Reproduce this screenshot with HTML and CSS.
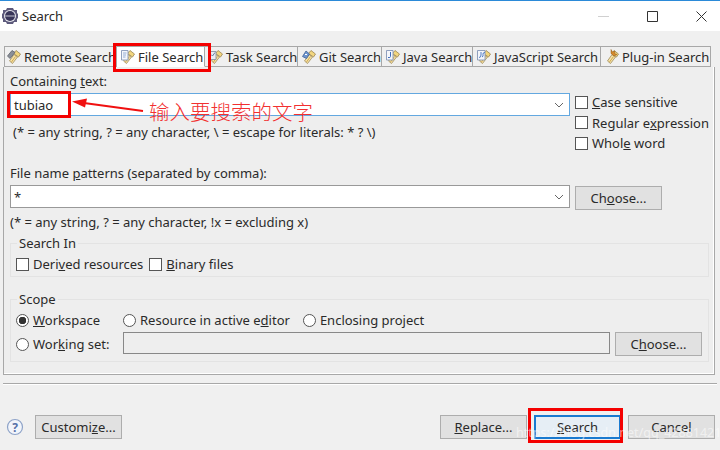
FILE: index.html
```
<!DOCTYPE html>
<html lang="en">
<head>
<meta charset="utf-8">
<title>Search</title>
<link rel="stylesheet" href="styles.css">
</head>
<body>
<svg class="defs" width="0" height="0" aria-hidden="true">
  <defs>
    <symbol id="torch" viewBox="0 0 16 16">
      <path d="M10 1.500l4.500 3.500-2 3-5-3.500z" fill="#f2d67e" stroke="#9a8450" stroke-width=".8"/>
      <path d="M8 5.500l3.500 2.500-5 6.500-3-2.500z" fill="#f6e3a8" stroke="#a08c5a" stroke-width=".8"/>
      <path d="M9.500 7.500l-4 5.500" stroke="#d0a850" stroke-width="1"/>
    </symbol>
    <symbol id="page" viewBox="0 0 16 16">
      <path d="M1.500 1.500h6.500v9.500H1.500z" fill="#f4f6fb" stroke="#8496b8" stroke-width=".9"/>
      <path d="M3 4h3.500M3 6h3M3 8h2.500" stroke="#7f9ccc" stroke-width=".8"/>
    </symbol>
    <symbol id="remote" viewBox="0 0 16 16">
      <path d="M1.500 7L6 1.500l3 2-5 6z" fill="#8a8f98" stroke="#5d626b" stroke-width=".8"/>
    </symbol>
    <symbol id="task" viewBox="0 0 16 16">
      <path d="M1.500 2.500h6.500v8H1.500z" fill="#e9edf4" stroke="#8a93a5" stroke-width=".9"/>
      <path d="M3 5.500l1.500 1.500L7 3.500" fill="none" stroke="#5a6f95" stroke-width=".9"/>
    </symbol>
    <symbol id="git" viewBox="0 0 16 16">
      <path d="M1.500 7.500L5 2l3.500 3-3 4.500z" fill="#6f96cf" stroke="#3f5f96" stroke-width=".8"/>
      <path d="M4 5.500h2" stroke="#fff" stroke-width="1"/>
    </symbol>
    <symbol id="java" viewBox="0 0 16 16">
      <path d="M1.500 1.500h6.500v9.500H1.500z" fill="#f4f6fb" stroke="#8496b8" stroke-width=".9"/>
      <path d="M5.500 3v4.500Q5.500 9 3 8.500" fill="none" stroke="#3f6fc0" stroke-width="1"/>
    </symbol>
    <symbol id="script" viewBox="0 0 16 16">
      <path d="M1.500 1.500h7.500v9.500H1.500z" fill="#f4f6fb" stroke="#8496b8" stroke-width=".9"/>
      <path d="M3 8.500Q5 8.500 5 6V3M9 3.500Q6.500 3.500 7 5.500T6 8" fill="none" stroke="#3f6fc0" stroke-width=".9"/>
    </symbol>
    <symbol id="plugin" viewBox="0 0 16 16">
      <path d="M7 .5l1.500 2.500 2.500-1-.5 2.500 2.500 1-3 1.500-3-2.500z" fill="#d98a2a" stroke="#8a5a1c" stroke-width=".5"/>
    </symbol>
  </defs>
</svg>

<header class="titlebar">
  <svg class="app-icon" viewBox="0 0 18 18" width="18" height="18">
    <path d="M2 3h3l1-2h6l1 2h3v3l1 1v4l-1 1v3h-3l-1 2H6l-1-2H2v-3l-1-1V7l1-1z" fill="#5d5a7c"/>
    <circle cx="9" cy="9" r="6" fill="#e8e8ee"/>
    <circle cx="9" cy="9" r="5" fill="#39365a"/>
    <path d="M4.200 9h9.600" stroke="#e8e8ee" stroke-width=".8"/>
  </svg>
  <span class="title">Search</span>
  <div class="window-controls">
    <svg viewBox="0 0 11 11" width="11" height="11"><path d="M0 5.500h11" stroke="#d0d0d0"/></svg>
    <svg viewBox="0 0 11 11" width="11" height="11"><path d="M.5 .5h10v10H.5z" fill="none" stroke="#333"/></svg>
    <svg viewBox="0 0 11 11" width="11" height="11"><path d="M.5 .5l10 10M10.500 .5l-10 10" stroke="#333"/></svg>
  </div>
</header>

<nav class="tabs">
  <div class="tab first"><svg width="16" height="16"><use href="#torch"/><use href="#remote"/></svg>Remote Search</div>
  <div class="tab active"><svg width="16" height="16"><use href="#torch"/><use href="#page"/></svg>File Search</div>
  <div class="tab"><svg width="16" height="16"><use href="#torch"/><use href="#task"/></svg>Task Search</div>
  <div class="tab"><svg width="16" height="16"><use href="#torch"/><use href="#git"/></svg>Git Search</div>
  <div class="tab"><svg width="16" height="16"><use href="#torch"/><use href="#java"/></svg>Java Search</div>
  <div class="tab"><svg width="16" height="16"><use href="#torch"/><use href="#script"/></svg>JavaScript Search</div>
  <div class="tab"><svg width="16" height="16"><use href="#torch"/><use href="#plugin"/></svg>Plug-in Search</div>
</nav>

<main class="panel">
  <section class="top-row">
    <div class="main-col">
      <div class="label">Containing <u>t</u>ext:</div>
      <div class="combo focus"><span>tubiao</span><svg class="chev" viewBox="0 0 10 6" width="10" height="6"><path d="M1 1l4 4 4-4" fill="none" stroke="#666"/></svg></div>
      <div class="hint indent">(* = any string, ? = any character, \ = escape for literals: * ? \)</div>
    </div>
    <div class="options">
      <label class="check"><i class="box"></i><span><u>C</u>ase sensitive</span></label>
      <label class="check"><i class="box"></i><span>Regular e<u>x</u>pression</span></label>
      <label class="check"><i class="box"></i><span>Whol<u>e</u> word</span></label>
    </div>
  </section>

  <section class="patterns">
    <div class="label">File name <u>p</u>atterns (separated by comma):</div>
    <div class="pattern-row">
      <div class="combo"><span>*</span><svg class="chev" viewBox="0 0 10 6" width="10" height="6"><path d="M1 1l4 4 4-4" fill="none" stroke="#666"/></svg></div>
      <button class="btn">Ch<u>o</u>ose...</button>
    </div>
    <div class="hint">(* = any string, ? = any character, !x = excluding x)</div>
  </section>

  <fieldset class="group search-in">
    <legend>Search In</legend>
    <div class="group-row">
      <label class="check"><i class="box"></i><span>Deri<u>v</u>ed resources</span></label>
      <label class="check"><i class="box"></i><span><u>B</u>inary files</span></label>
    </div>
  </fieldset>

  <fieldset class="group scope">
    <legend>Scope</legend>
    <div class="scope-grid">
      <label class="check"><i class="radio on"></i><span><u>W</u>orkspace</span></label>
      <div class="scope-others">
        <label class="check"><i class="radio"></i><span>Resource in active e<u>d</u>itor</span></label>
        <label class="check"><i class="radio"></i><span>Enclosing project</span></label>
      </div>
      <label class="check"><i class="radio"></i><span>Wor<u>k</u>ing set:</span></label>
      <div class="working">
        <div class="text-field"></div>
        <button class="btn">C<u>h</u>oose...</button>
      </div>
    </div>
  </fieldset>
</main>

<div class="separator"></div>

<footer class="footer">
  <svg class="help" viewBox="0 0 18 18" width="18" height="18">
    <circle cx="9" cy="9" r="7.500" fill="#f2f5fb" stroke="#8ea3c8" stroke-width="1.200"/>
    <text x="9" y="13.500" text-anchor="middle" class="help-mark">?</text>
  </svg>
  <button class="btn">Customi<u>z</u>e...</button>
  <div class="spacer"></div>
  <button class="btn"><u>R</u>eplace...</button>
  <button class="btn default"><u>S</u>earch</button>
  <button class="btn">Cancel</button>
</footer>

<div class="mark mark-tab"></div>
<div class="mark mark-input"></div>
<div class="mark mark-search"></div>
<svg class="arrow" viewBox="0 0 72 16" width="72" height="16">
  <path d="M12 5L71 13" stroke="#f01010" stroke-width="2"/>
  <path d="M0 3.500L15 0.500L13 9.500z" fill="#f01010"/>
</svg>
<div class="note">输入要搜索的文字</div>
<div class="watermark">https://blog.csdn.net/qq_42881421</div>
</body>
</html>
```
FILE: styles.css
```
* { box-sizing: border-box; }
html, body { margin: 0; padding: 0; }
body {
  position: relative;
  width: 720px;
  height: 450px;
  overflow: hidden;
  background: #f0f0f0;
  color: #2a2a2a;
  font: 13px/16px "Noto Sans", "Open Sans", sans-serif;
}
.defs { position: absolute; }
u { text-underline-offset: 1px; }

.titlebar {
  display: flex;
  align-items: center;
  height: 31px;
  padding: 0 0 0 1px;
  background: #fff;
  border-top: 1px solid #2b8ad8;
}
.app-icon { flex: none; }
.title { margin-left: 3px; }
.window-controls {
  display: flex;
  margin-left: auto;
  margin-right: 13px;
  gap: 38px;
}

.tabs {
  display: grid;
  grid-template-columns: 113px 88px 93px 84px 91px 128px 110px;
  height: 21px;
  margin: 15px 0 0 4px;
}
.tab {
  display: flex;
  align-items: center;
  gap: 2px;
  padding-left: 3px;
  overflow: hidden;
  white-space: nowrap;
  border: 1px solid #a8a8a8;
  border-left: 0;
  background: #f0f0f0;
}
.tab.first { border-left: 1px solid #a8a8a8; padding-left: 1px; }
.tab.active {
  background: #fff;
  border-bottom-color: #fff;
}
.tab svg { flex: none; }

.panel {
  width: 712px;
  height: 308px;
  margin-left: 3px;
  padding: 0 5px 0 6px;
  background: #eee;
  border: 1px solid #a8a8a8;
  border-top: 0;
  box-shadow: inset -1px -1px 0 #fff;
}
.top-row { display: flex; gap: 5px; }
.main-col { width: 560px; }
.label { padding-top: 6px; }
.combo {
  display: flex;
  align-items: center;
  justify-content: space-between;
  width: 560px;
  height: 23px;
  margin-top: 4px;
  padding: 0 5px 0 3px;
  background: #fff;
  border: 1px solid #999;
}
.combo.focus { border-color: #63a8e0; }
.chev { flex: none; }
.hint { margin-top: 8px; }
.hint.indent { padding-left: 3px; }
.patterns .hint { margin-top: 4px; }

.options {
  display: flex;
  flex-direction: column;
  gap: 4.500px;
  padding-top: 27px;
}
.check {
  display: flex;
  align-items: center;
  gap: 4px;
  white-space: nowrap;
}
.box {
  flex: none;
  width: 13px;
  height: 13px;
  background: #fff;
  border: 1px solid #555;
}
.radio {
  flex: none;
  width: 13px;
  height: 13px;
  border-radius: 50%;
  background: #fff;
  border: 1px solid #555;
}
.radio.on { background: radial-gradient(circle, #333 0 3.500px, #fff 4px); }

.patterns { margin-top: 8px; }
.pattern-row { display: flex; gap: 5px; align-items: flex-start; }
.pattern-row .btn { margin-top: 5px; }

.btn {
  flex: none;
  width: 87px;
  height: 24px;
  padding: 0;
  font: inherit;
  color: inherit;
  background: #e1e1e1;
  border: 1px solid #adadad;
}
.btn.default { border: 2px solid #1a7ad0; background: #e6eef5; }

.group {
  margin: 0;
  padding: 0;
  width: 699px;
  border: 1px solid #e3e3e3;
}
.group legend { margin-left: 6px; padding: 0 2px 0 2px; line-height: 14px; }
.search-in { height: 41px; margin-top: 6px; }
.group-row { display: flex; gap: 6px; padding: 6px 0 0 5px; }
.scope { height: 70px; margin-top: 15px; }
.scope-grid {
  display: grid;
  grid-template-columns: 107px 1fr;
  row-gap: 4px;
  padding: 6px 6px 0 5px;
  align-items: center;
}
.scope-others { display: flex; gap: 13px; }
.working { display: flex; gap: 5px; }
.text-field {
  flex: 1;
  height: 22px;
  background: #eee;
  border: 1px solid #888;
}

.separator {
  height: 2px;
  margin: 8px 0 0 3px;
  width: 714px;
  background: #a8a8a8;
  border-bottom: 1px solid #fff;
}

.footer {
  display: flex;
  align-items: center;
  gap: 7px;
  margin-top: 30px;
  padding: 0 5px 0 6px;
}
.help { margin-right: 4px; }
.help-mark { font: 700 12px "Noto Sans", sans-serif; fill: #5570a8; }
.spacer { flex: 1; }

.mark { position: absolute; border: 3px solid #f40000; }
.mark-tab { left: 113px; top: 43px; width: 98px; height: 29px; }
.mark-input { left: 7px; top: 91px; width: 64px; height: 27px; }
.mark-search { left: 528px; top: 408px; width: 95px; height: 35px; }
.arrow { position: absolute; left: 72px; top: 98px; }
.note {
  position: absolute;
  left: 149px;
  top: 98px;
  color: #f23030;
  font: 300 20.500px/26px "Noto Sans CJK SC", sans-serif;
  white-space: nowrap;
}
.watermark {
  position: absolute;
  left: 516px;
  top: 425px;
  color: rgba(255, 255, 255, .55);
  font: 12.500px/16px "Noto Sans", sans-serif;
  white-space: nowrap;
}
```
